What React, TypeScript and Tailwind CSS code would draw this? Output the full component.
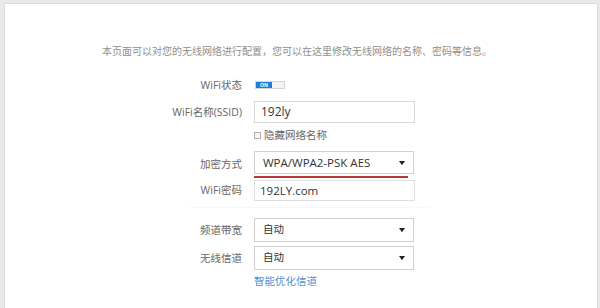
import React from "react";

const font = { fontFamily: '"Open Sans", "Noto Sans CJK SC", sans-serif' };

function Label({ children }: { children: React.ReactNode }) {
  return (
    <div className="w-[237px] shrink-0 text-right text-[10.5px] text-[#666] leading-none pr-0">
      {children}
    </div>
  );
}

function Arrow() {
  return (
    <svg width="6" height="5" viewBox="0 0 6 5" className="absolute right-[8px] top-1/2 -translate-y-1/2">
      <path d="M0 0.5 L6 0.5 L3 4.8 Z" fill="#222" />
    </svg>
  );
}

export default function App() {
  return (
    <div className="w-[600px] h-[308px] bg-[#e9e9e9] pt-[3px] overflow-hidden" style={font}>
      <div className="ml-[4px] mr-[2px] h-[320px] bg-white border border-[#dcdcdc] flex flex-col">
        <div className="mt-[42px] text-center text-[10px] text-[#8f8f8f] leading-none pr-[8px]">
          本页面可以对您的无线网络进行配置，您可以在这里修改无线网络的名称、密码等信息。
        </div>

        <div className="mt-[23px] flex items-center gap-[13px] h-[12px]">
          <Label>WiFi状态</Label>
          <div className="flex w-[30px] h-[8px] border border-[#d6d6d6]">
            <div className="w-[16px] h-full bg-[#1f7fd6] flex items-center justify-center">
              <span className="text-[5px] leading-none text-white font-bold">ON</span>
            </div>
            <div className="flex-1 bg-[#f4f4f4]" />
          </div>
        </div>

        <div className="mt-[10px] flex items-center gap-[12px]">
          <Label>WiFi名称(SSID)</Label>
          <div className="w-[161px] h-[22px] border border-[#d9d9d9] flex items-center pl-[6px] text-[12px] text-[#333]">
            192ly
          </div>
        </div>

        <div className="mt-[6px] flex items-center gap-[12px] h-[12px]">
          <div className="w-[237px] shrink-0" />
          <div className="flex items-center gap-[3px]">
            <div className="w-[7px] h-[7px] border border-[#b0b0b0] bg-[#f6f6f6]" />
            <span className="text-[10.5px] text-[#666] leading-none">隐藏网络名称</span>
          </div>
        </div>

        <div className="mt-[10px] flex items-center gap-[12px]">
          <Label>加密方式</Label>
          <div className="flex flex-col">
            <div className="relative w-[160px] h-[23px] border border-[#d0d0d0] flex items-center pl-[8px] text-[11.5px] text-[#333]">
              WPA/WPA2-PSK AES
              <Arrow />
            </div>
            <div className="mt-[2px] w-[154px] h-[2px] bg-[#b8373b]" />
          </div>
        </div>

        <div className="mt-[2px] flex items-center gap-[12px]">
          <Label>WiFi密码</Label>
          <div className="w-[161px] h-[21px] border border-[#e0e0e0] flex items-center pl-[5px] text-[11.5px] text-[#333]">
            192LY.com
          </div>
        </div>

        <div className="mt-[6px] ml-[184px] w-[240px] h-px bg-[#f8f8f8]" />

        <div className="mt-[10px] flex items-center gap-[12px]">
          <Label>频道带宽</Label>
          <div className="relative w-[160px] h-[24px] border border-[#d0d0d0] flex items-center pl-[8px] text-[10.5px] text-[#333]">
            自动
            <Arrow />
          </div>
        </div>

        <div className="mt-[4px] flex items-center gap-[12px]">
          <Label>无线信道</Label>
          <div className="relative w-[160px] h-[24px] border border-[#d0d0d0] flex items-center pl-[8px] text-[10.5px] text-[#333]">
            自动
            <Arrow />
          </div>
        </div>

        <div className="mt-[6px] flex items-center gap-[12px]">
          <div className="w-[237px] shrink-0" />
          <span className="text-[10.5px] text-[#5590cf] leading-none">智能优化信道</span>
        </div>
      </div>
    </div>
  );
}
